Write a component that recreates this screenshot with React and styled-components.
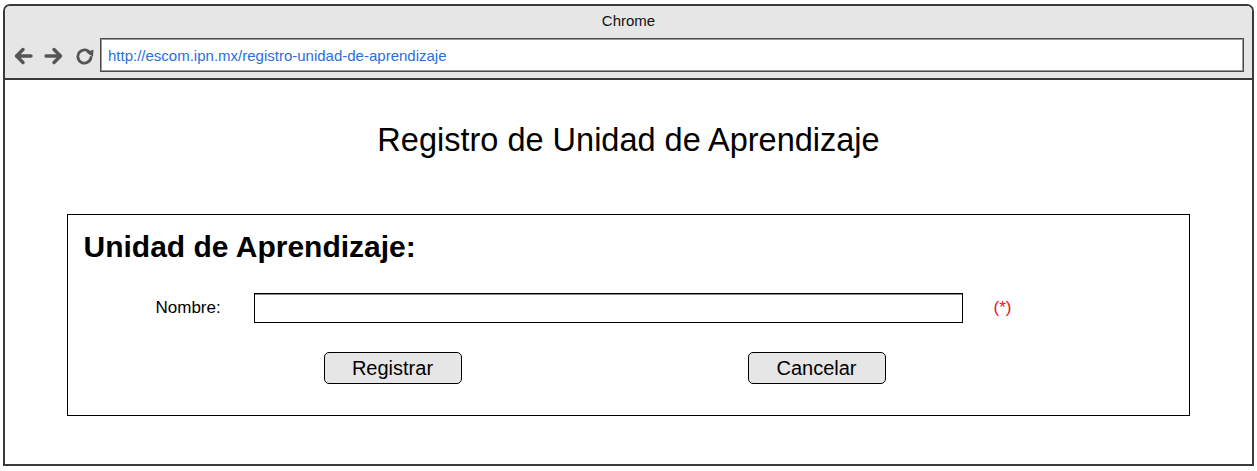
import React from 'react';
import styled, { createGlobalStyle } from 'styled-components';

const GlobalStyle = createGlobalStyle`
  html, body {
    margin: 0;
    padding: 0;
    background: #ffffff;
  }
  body {
    font-family: "Liberation Sans", Arial, sans-serif;
  }
`;

const Window = styled.div`
  box-sizing: border-box;
  margin: 4px 0 0 3px;
  width: 1251px;
  height: 462px;
  border: 2px solid #3a3a3a;
  border-radius: 7px 7px 0 0;
  display: flex;
  flex-direction: column;
  overflow: hidden;
  box-shadow: 0 2px 0 #e6e6e6;
`;

const Toolbar = styled.div`
  background: #e6e6e6;
  border-bottom: 2px solid #3a3a3a;
  display: flex;
  flex-direction: column;
`;

const WindowTitle = styled.div`
  height: 28px;
  display: flex;
  align-items: center;
  justify-content: center;
  font-size: 15px;
  color: #111;
`;

const AddressRow = styled.div`
  display: flex;
  align-items: center;
  padding: 4px 8px 6px 8px;
`;

const NavButtons = styled.div`
  display: flex;
  align-items: center;
  gap: 11px;
  width: 87px;
  padding-top: 2px;
`;

const AddressBar = styled.div`
  flex: 1;
  box-sizing: border-box;
  height: 34px;
  background: #fff;
  border: 1px solid #4a4a4a;
  box-shadow: inset 0 0 0 1px #9a9a9a;
  display: flex;
  align-items: center;
  padding-left: 7px;
  font-size: 15px;
  color: #2a6fdb;
`;

const Content = styled.div`
  flex: 1;
  background: #fff;
  display: flex;
  flex-direction: column;
  align-items: center;
  padding-top: 41px;
`;

const PageTitle = styled.h1`
  margin: 0;
  font-size: 32.5px;
  line-height: 38px;
  font-weight: 400;
  color: #000;
`;

const FormBox = styled.section`
  box-sizing: border-box;
  width: 1123px;
  margin-top: 55px;
  margin-right: 1px;
  border: 1px solid #000;
  padding: 14px 16px 31px 16px;
  display: flex;
  flex-direction: column;
`;

const SectionHeading = styled.h2`
  margin: 0;
  font-size: 30px;
  line-height: 36px;
  font-weight: 700;
  color: #000;
`;

const FieldRow = styled.div`
  display: flex;
  align-items: center;
  margin-top: 28px;
  padding-left: 72px;
`;

const Label = styled.label`
  width: 98px;
  font-size: 17px;
  color: #000;
`;

const TextInput = styled.input`
  box-sizing: border-box;
  width: 709px;
  height: 30px;
  border: 1px solid #000;
  box-shadow: inset 0 1px 0 #8a8a8a;
  outline: none;
  margin: 0;
  padding: 0 6px;
  font-family: inherit;
  font-size: 16px;
`;

const Required = styled.span`
  margin-left: 31px;
  font-size: 17px;
  color: #e8101a;
`;

const ButtonRow = styled.div`
  display: flex;
  margin-top: 29px;
  padding-left: 240px;
  gap: 286px;
`;

const Button = styled.button`
  box-sizing: border-box;
  width: 138px;
  height: 32px;
  background: #e6e6e6;
  border: 1px solid #000;
  border-radius: 5px;
  font-family: inherit;
  font-size: 20px;
  color: #000;
  padding: 0;
  cursor: pointer;
`;

const ArrowIcon = ({ flip }) => (
  <svg width="20" height="18" viewBox="0 0 20 18" style={{ transform: flip ? 'scaleX(-1)' : 'none' }}>
    <path
      d="M18 9H3.5M10 2.5L3.5 9L10 15.5"
      fill="none"
      stroke="#555"
      strokeWidth="3.4"
      strokeLinecap="round"
      strokeLinejoin="round"
    />
  </svg>
);

const ReloadIcon = () => (
  <svg width="20" height="18" viewBox="0 0 20 18">
    <path
      d="M15.2 6.2A6.6 6.6 0 1 0 16 10.5"
      fill="none"
      stroke="#555"
      strokeWidth="2.8"
      strokeLinecap="round"
    />
    <polygon points="11.5,5.5 18.5,2.5 18,9.8" fill="#555" />
  </svg>
);

const App = () => (
  <>
    <GlobalStyle />
    <Window>
      <Toolbar>
        <WindowTitle>Chrome</WindowTitle>
        <AddressRow>
          <NavButtons>
            <ArrowIcon />
            <ArrowIcon flip />
            <ReloadIcon />
          </NavButtons>
          <AddressBar>http://escom.ipn.mx/registro-unidad-de-aprendizaje</AddressBar>
        </AddressRow>
      </Toolbar>
      <Content>
        <PageTitle>Registro de Unidad de Aprendizaje</PageTitle>
        <FormBox>
          <SectionHeading>Unidad de Aprendizaje:</SectionHeading>
          <FieldRow>
            <Label>Nombre:</Label>
            <TextInput type="text" />
            <Required>(*)</Required>
          </FieldRow>
          <ButtonRow>
            <Button>Registrar</Button>
            <Button>Cancelar</Button>
          </ButtonRow>
        </FormBox>
      </Content>
    </Window>
  </>
);

export default App;
